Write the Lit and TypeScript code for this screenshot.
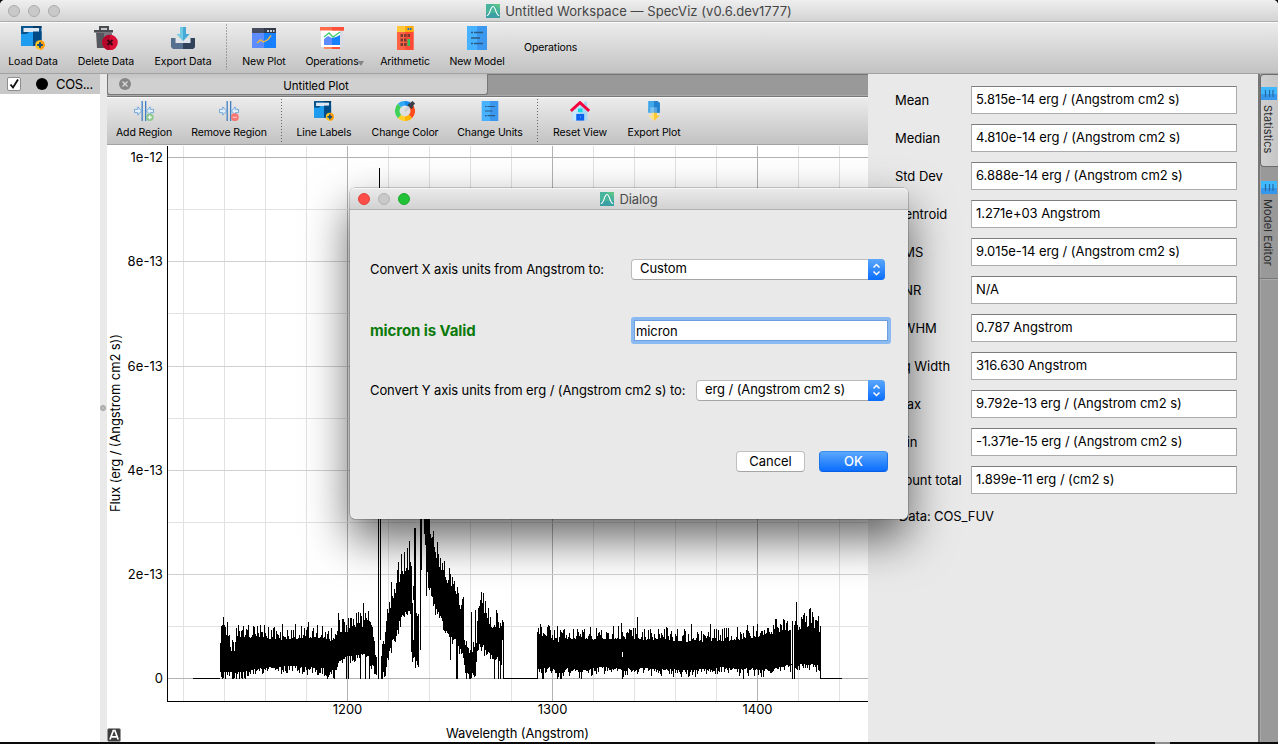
import { LitElement, html, svg, css } from "lit";
import { customElement, property } from "lit/decorators.js";

const icons: Record<string, any> = {
  load: svg`<path fill="#08548f" d="M0 0h20.500v20H0z"/><path fill="#003a66" d="M12 0h8.500v2H12z"/><path fill="#dfe8f2" d="M2.500 2h15.500v4H2.500z"/><path fill="#1e9cf0" d="M0 8h6l2-2h4v14H0z"/><path fill="#004a86" d="M12 5.500h8.500V20H12z"/><circle cx="19" cy="19" r="4.800" fill="#ffc423"/><path fill="#ff9c0e" d="M19 14.200a4.800 4.800 0 0 1 0 9.600z"/><path fill="#124a78" d="M18 16.300h2V18h1.800v2H20v1.800h-2V20h-1.800v-2H18z"/>`,
  trash: svg`<path fill="#4b4b52" d="M5 0h10v4h4v2.500H0V4h5z"/><path fill="#c8c8ca" d="M7 2h6v2H7z"/><path fill="#56565e" d="M2 6.500h15V22H3z"/><path fill="#77777f" d="M10 6.500h8V12h-8z"/><circle cx="16" cy="16.500" r="7.800" fill="#d90f35"/><path fill="#b4062a" d="M16 8.700a7.800 7.800 0 0 0 0 15.600z"/><path stroke="#3d0413" stroke-width="1.900" d="M13.500 14l5 5M18.500 14l-5 5"/>`,
  exportd: svg`<path fill="#56718f" d="M0 12h5v5h14v-5h5v9l-2 2H2l-2-2z"/><path fill="#30425a" d="M12 17h7v-5h5v9l-2 2H12z"/><path fill="#dfe5ea" d="M4.500 12h3l4.500 4 4.500-4h3v5h-15z"/><path fill="#72cbe2" d="M9 1h6v7h3.500L12 15 5.500 8H9z"/><path fill="#45a9d8" d="M12 1h3v7h3.500L12 15z"/>`,
  plot: svg`<path fill="#454d5e" d="M0 2h24v6H0z"/><path fill="#323948" d="M12 2h12v6H12z"/><path fill="#5d8cff" d="M0 7h12v15H0z"/><path fill="#1680ff" d="M12 7h12v15H12z"/><path fill="#fff" d="M15 4.200h2v1.600h-2zM18 4.200h2v1.600h-2zM21 4.200h1.500v1.600H21z"/><path fill="none" stroke="#f1b63c" stroke-width="1.400" d="M5 17l3.500-3 3 2L16 13.500l3-4"/>`,
  ops: svg`<path fill="#fff" d="M1 4h22v17H1z"/><path fill="#d8dce6" d="M20 4h3v17h-3z"/><path fill="#ff6a48" d="M0 1h24v3.500H0z"/><path fill="#ff4f38" d="M12 1h12v3.500H12zM12 21h8v2h-8z"/><path fill="#ff8a62" d="M4 21h8v2H4z"/><path fill="#5d8cff" d="M4 13l4-3 4 2v7H4z"/><path fill="#1680ff" d="M12 12l4-1 4-2v10h-8z"/><path fill="none" stroke="#43cf72" stroke-width="1.400" d="M4 11l5-4 4 4 7-5"/>`,
  calc: svg`<path fill="#ff6345" d="M4 5h16.500v19H4z"/><path fill="#ff4a38" d="M12 5h8.500v19H12z"/><path fill="#ffc83a" d="M4 0h16.500v6H4z"/><path fill="#ffab08" d="M12 0h8.500v6H12z"/><path fill="#1676c8" d="M14.500 2h1.800v2h-1.800zM17 2h1.500v2H17z"/><path fill="#7d3a34" d="M7.500 8h2.500v3H7.500zM11 8h2.500v3H11zM14.500 8H17v3h-2.500zM7.500 12.500h2.500v3H7.500zM11 12.500h2.500v3H11zM7.500 17h2.500v3H7.500zM11 17h2.500v3H11z"/><path fill="#2fc45c" d="M14.500 13H17v7h-2.500z"/>`,
  doc: svg`<path fill="#47b2ff" d="M2 0h10v24H2z"/><path fill="#3b98ee" d="M12 0h10v24H12z"/><path stroke="#2c5b83" stroke-width="1.300" d="M6 6.500h2M9 6.500h9M6 12h9M6 17.500h2M9 17.500h9"/>`,
  add: svg`<path stroke="#3a7cc4" stroke-width="1.500" d="M9.800 0v24M14 0v24"/><path fill="#e4effa" stroke="#5f9cd8" d="M.6 10h4V7L9 12l-4.400 5v-3h-4zM23.400 10h-4V7L15 12l4.400 5v-3h4z"/><circle cx="19" cy="19.500" r="4.500" fill="#8cc88e"/><path stroke="#fff" stroke-width="1.400" d="M16.500 19.500h5M19 17v5"/>`,
  remove: svg`<path stroke="#3a7cc4" stroke-width="1.500" d="M9.800 0v24M14 0v24"/><path fill="#e4effa" stroke="#5f9cd8" d="M.6 10h4V7L9 12l-4.400 5v-3h-4zM23.400 10h-4V7L15 12l4.400 5v-3h4z"/><circle cx="19" cy="19.500" r="4.700" fill="#f77672"/><path stroke="#fbd0ce" stroke-width="1.400" d="M16.300 19.500h5.400"/>`,
  color: svg`<g fill="none" stroke-width="5.500"><path stroke="#2fa8f5" d="M5.400 5.400A9.300 9.300 0 0 1 12 2.700"/><path stroke="#118df0" d="M12 2.700A9.300 9.300 0 0 1 18.600 5.400"/><path stroke="#ff4a1a" d="M18.600 5.400A9.300 9.300 0 0 1 18.600 18.600"/><path stroke="#ffb400" d="M18.600 18.600A9.300 9.300 0 0 1 12 21.300"/><path stroke="#ffd02b" d="M12 21.300A9.300 9.300 0 0 1 5.400 18.600"/><path stroke="#3fd05a" d="M5.400 18.600A9.300 9.300 0 0 1 5.400 5.400"/></g><path stroke="#c9ced2" stroke-width="3" d="M12 12l5-5"/><path stroke="#3a3f48" stroke-width="3.500" d="M16 3.500l5 5"/><path stroke="#3a3f48" stroke-width="4.500" d="M18.500 5.500L22.500 1.500"/>`,
  home: svg`<path fill="#a9daf5" d="M17 1h3.500v8H17zM3 11l9-8 9 8v12.500H3z"/><path fill="#c5e8fa" d="M3 11l9-8v20.500H3z"/><path fill="#12d8e4" d="M9.500 9h5.500v4.500H9.500z"/><path fill="#0b62f0" d="M7.500 15.500h9.500v8H7.500z"/><path fill="#5fa0ff" d="M12 18h1v2h-1z"/><path fill="none" stroke="#f4033c" stroke-width="3.600" d="M1 12L12 2l11 10"/>`,
  save: svg`<path fill="#3fa7ea" d="M5 0h11l3 2.500V14H5z"/><path fill="#2382cf" d="M12 0h4l3 2.500V14h-7z"/><path fill="#7cc0ee" d="M7.500 7.500H12V14H7.500z"/><path fill="#5ba8e0" d="M12 7.500h3.500V14H12z"/><path fill="#ffe08a" d="M9 14h3v10l-7-6.500h4z"/><path fill="#ffc832" d="M12 14h3.500v3.500H19L12 24z"/>`,
};

const logo = svg`<path fill="#48b49b" d="M0 0h14v14H0z"/><path fill="#5cc489" d="M6 0h8v5z"/><path fill="#3aa0a4" d="M0 9h14v5H0z"/><path fill="none" stroke="#fff" stroke-width="1.100" d="M.8 11.500C4.500 11.500 4 2.500 7 2.500s2.500 9 6.200 9"/>`;

/** Toolbar button: a glyph with its caption below. */
@customElement("tool-item")
class ToolItem extends LitElement {
  @property() icon = "";
  @property() label = "";
  @property({ type: Number }) size = 24;
  @property({ type: Boolean }) menu = false;
  static styles = css`
    :host { display: flex; flex-direction: column; align-items: center; flex: none; }
    svg { display: block; }
    .cap { position: relative; font-size: 10.5px; letter-spacing: -0.12px; line-height: 14px; white-space: nowrap; margin-top: 5px; }
    .arrow { position: absolute; left: 100%; top: 6px; border: 3.5px solid transparent; border-top: 5px solid #858585; border-bottom: 0; margin-left: -1px; }
  `;
  render() {
    return html`<svg width=${this.size} height=${this.size} viewBox="0 0 24 24">${icons[this.icon]}</svg>
      <div class="cap">${this.label}${this.menu ? html`<span class="arrow"></span>` : ""}</div>`;
  }
}

/** Control points of the spectrum envelope: x, upper edge, lower edge. */
const envelope: number[][] = [
  [220, 640, 672], [222, 632, 673], [226, 632, 672], [229, 640, 672], [231, 648, 673], [234, 648, 674], [236, 634, 673], [250, 635, 671],
  [262, 635, 669], [280, 637, 667], [300, 636, 667], [325, 635, 669], [330, 640, 671], [334, 637, 671], [338, 630, 663], [347, 629, 657],
  [352, 625, 656], [359, 622, 656], [362, 624, 653], [368, 622, 657], [372, 626, 664], [374, 645, 669], [376, 662, 676], [377, 666, 678],
];
const peak: number[][] = [
  [381, 660, 678], [383, 656, 672], [385, 632, 665], [388, 612, 655], [392, 598, 640], [396, 588, 630], [400, 577, 619], [405, 570, 611],
  [410, 565, 604], [411, 572, 640], [412, 600, 652], [413, 600, 650], [416, 610, 662], [418, 622, 668], [419, 590, 645],
];
const decline: number[][] = [
  [424, 519, 530], [426, 519, 560], [428, 522, 580], [431, 535, 594], [435, 552, 608], [440, 567, 616], [445, 577, 631], [450, 586, 638],
  [456, 600, 640], [461, 608, 652], [463, 612, 655], [465, 644, 673], [470, 652, 674], [474, 650, 672], [476, 640, 660], [478, 605, 644],
  [482, 606, 644], [487, 618, 651], [492, 626, 657], [497, 626, 658], [502, 626, 665],
];
const right: number[][] = [
  [537, 632, 670], [548, 635, 667], [555, 638, 671], [560, 640, 674], [564, 636, 669], [580, 637, 671], [600, 637, 668], [620, 636, 669],
  [640, 637, 669], [660, 637, 670], [690, 639, 671], [720, 638, 668], [740, 637, 670], [750, 636, 669], [760, 633, 671], [775, 630, 669],
  [785, 628, 666], [795, 627, 666], [803, 626, 664], [813, 625, 664], [820, 630, 668],
];

function spectrum(): string {
  let seed = 41;
  const rnd = () => (seed = (seed * 16807) % 2147483647) / 2147483647;
  let d = "";
  const bar = (x: number, a: number, b: number) => { d += `M${x + 0.5} ${Math.round(a)}V${Math.round(b)}`; };
  const fill = (pts: number[][], noise: number) => {
    for (let i = 0; i < pts.length - 1; i++) {
      const [x0, t0, b0] = pts[i], [x1, t1, b1] = pts[i + 1];
      for (let x = x0; x < x1; x++) {
        const k = (x - x0) / (x1 - x0);
        const up = Math.pow(rnd(), 1.8) * noise - 3;
        const dn = Math.pow(rnd(), 2) * noise * 0.6 - 1;
        bar(x, t0 + (t1 - t0) * k - up, Math.min(679, b0 + (b1 - b0) * k + dn));
      }
    }
  };
  fill(envelope, 14);
  fill(peak, 22);
  fill(decline, 20);
  fill(right, 13);
  const spikes: number[][] = [
    [223, 617, 670], [227, 622, 670], [221, 630, 672], [238, 626, 670], [257, 626, 670], [282, 624, 670], [295, 624, 668], [308, 622, 668],
    [338, 613, 660], [350, 618, 655], [358, 612, 650], [363, 603, 650], [366, 618, 650], [379, 168, 188], [378, 519, 640], [380, 519, 640],
    [378, 620, 679], [245, 640, 679], [232, 640, 679], [233, 655, 679], [225, 640, 679], [327, 640, 679], [334, 650, 679], [346, 640, 679], [348, 640, 679],
    [360, 640, 679], [365, 640, 679], [369, 640, 679], [398, 562, 600], [391, 582, 640], [401, 554, 600], [407, 548, 600], [409, 541, 600],
    [414, 528, 655], [415, 528, 640], [420, 519, 650], [421, 519, 570], [424, 519, 532], [425, 519, 535], [426, 519, 596], [427, 519, 572], [428, 519, 580],
    [433, 531, 600], [437, 542, 610], [444, 571, 620], [449, 568, 636], [450, 590, 660], [453, 584, 640], [458, 593, 640], [456, 600, 679], [457, 610, 679],
    [463, 597, 650], [466, 645, 679], [470, 650, 679], [471, 612, 678], [475, 610, 676], [480, 600, 640], [481, 592, 640], [483, 594, 640], [488, 608, 650],
    [496, 610, 652], [494, 640, 679], [498, 640, 679], [500, 624, 679], [502, 620, 640], [503, 622, 679], [537, 632, 678], [548, 625, 668], [557, 626, 679],
    [542, 640, 679], [543, 650, 679], [561, 640, 679], [581, 650, 679], [590, 627, 668], [621, 623, 670], [622, 650, 679], [623, 640, 677], [637, 617, 668], [666, 627, 668],
    [691, 624, 668], [710, 624, 669], [743, 645, 679], [737, 627, 668], [747, 625, 668], [757, 624, 668], [775, 619, 668], [776, 619, 664], [784, 620, 664],
    [792, 621, 679], [794, 625, 679], [796, 602, 664], [803, 615, 664], [804, 613, 664], [806, 617, 662], [809, 609, 660], [810, 608, 660], [812, 612, 664], [818, 616, 664], [820, 626, 679],
  ];
  spikes.forEach((s) => bar(s[0], s[1], s[2]));
  return d;
}
const trace = spectrum();

const gridX = Array.from({ length: 17 }, (_, i) => 183 + 41 * i);
const gridY = [157, 209, 261, 313, 366, 418, 470, 522, 574, 626, 678];

/** Spectrum plot with its axes; user units are window pixels. */
@customElement("spectrum-plot")
class SpectrumPlot extends LitElement {
  static styles = css`
    :host { display: block; background: #fff; overflow: hidden; }
    svg { display: block; }
    text { font: 13px Inter, "Liberation Sans", sans-serif; fill: #000; }
    .crisp { shape-rendering: crispEdges; }
    .tick { letter-spacing: .1px; }
  `;
  render() {
    return html`<svg width="761" height="597" viewBox="107 145 761 597">
      <g class="crisp" fill="none">
        ${gridX.map((x, i) => svg`<path d="M${x + 0.5} 146V701" stroke=${i % 5 === 4 ? "#b2b2b2" : "#e2e2e2"} />`)}
        ${gridY.map((y, i) => svg`<path d="M168 ${y + 0.5}H868" stroke=${i % 10 === 0 ? "#b2b2b2" : i % 2 ? "#e2e2e2" : "#d0d0d0"} />`)}
        <path d="M167.500 146V701.500H868" stroke="#000" />
        <path d="M193 678.500H220M503 678.500H538M820 678.500H842" stroke="#000" />
        <path d=${trace} stroke="#000" />
        <path d="M413.500 600V640M464.500 600V640M476.500 590V606M622.500 652V657M791.500 610V664M793.500 625V678M417.500 519V610M422.500 519V677M423.500 535V677" stroke="#fff" />
      </g>
      ${[["1e-12", 162], ["8e-13", 266], ["6e-13", 370.500], ["4e-13", 475], ["2e-13", 579], ["0", 683]].map(([t, y]) => svg`<text class="tick" x="163" y=${y} text-anchor="end">${t}</text>`)}
      ${[["1200", 347.500], ["1300", 552.500], ["1400", 757.500]].map(([t, x]) => svg`<text x=${x} y="714" text-anchor="middle">${t}</text>`)}
      <text x="446" y="738" textLength="143">Wavelength (Angstrom)</text>
      <text transform="translate(119.500 512) rotate(-90)" textLength="178">Flux (erg / (Angstrom cm2 s))</text>
      <rect x="107.500" y="728.500" width="13" height="13" rx="1.500" fill="#3c3c3c" stroke="#999" />
      <path d="M110 739.500L113.300 730.500h1.600L118.200 739.500M111.700 736.800h4.800" fill="none" stroke="#fff" stroke-width="1.700" />
    </svg>`;
  }
}

const stats = [
  ["Mean", "5.815e-14 erg / (Angstrom cm2 s)"], ["Median", "4.810e-14 erg / (Angstrom cm2 s)"], ["Std Dev", "6.888e-14 erg / (Angstrom cm2 s)"],
  ["Centroid", "1.271e+03 Angstrom"], ["RMS", "9.015e-14 erg / (Angstrom cm2 s)"], ["SNR", "N/A"], ["FWHM", "0.787 Angstrom"],
  ["Eq Width", "316.630 Angstrom"], ["Max", "9.792e-13 erg / (Angstrom cm2 s)"], ["Min", "-1.371e-15 erg / (Angstrom cm2 s)"], ["Count total", "1.899e-11 erg / (cm2 s)"],
];

/** Modal for converting the axis units. */
@customElement("units-dialog")
class UnitsDialog extends LitElement {
  static styles = css`
    :host { display: flex; flex-direction: column; box-sizing: border-box; background: #e9e9e9; border-radius: 5px; font-size: 13px; letter-spacing: -0.09px;
      box-shadow: 0 0 0 0.5px rgba(0,0,0,.35), 0 20px 45px rgba(0,0,0,.6); }
    .bar { height: 22px; box-sizing: border-box; border-bottom: 1px solid #b1b1b1; border-radius: 5px 5px 0 0; background: linear-gradient(#ebebeb, #d2d2d2); display: grid; grid-template-columns: 1fr auto 1fr; align-items: center; box-shadow: inset 0 1px #f6f6f6; }
    .lights { display: flex; gap: 8px; padding-left: 8px; }
    .dot { width: 12px; height: 12px; box-sizing: border-box; border-radius: 50%; background: #c9c9c9; border: 1px solid #b3b3b3; }
    .red { background: #fd4e48; border-color: #e2413c; }
    .green { background: #22c236; border-color: #1bab2c; }
    .title { display: flex; gap: 5px; align-items: center; color: #4a4a4a; padding-top: 1px; }
    .row { display: flex; align-items: center; padding: 0 23px 0 20px; height: 27px; white-space: nowrap; }
    .r1 { margin-top: 46px; } .r2 { margin-top: 34px; padding-right: 17px; } .r3 { margin-top: 33px; }
    .lab { padding-bottom: 2px; }
    .ok-msg { color: #0b7a0b; font-weight: 700; font-size: 15px; letter-spacing: -0.1px; padding-bottom: 1px; }
    .grow { flex: 1; }
    .select { display: flex; height: 21px; box-sizing: border-box; background: #fff; border: 1px solid #bcbcbc; border-bottom-color: #a5a5a5; border-radius: 4px; line-height: 17px; padding-left: 8px; justify-content: space-between; }
    .wide { width: 254px; } .narrow { width: 189px; }
    .step { width: 17px; height: 21px; margin: -1px; border-radius: 0 4px 4px 0; background: linear-gradient(#5aa7fb, #0a6dfd); display: block; }
    .field { width: 260px; height: 27px; box-sizing: border-box; border: 3px solid #8abaf1; border-radius: 3px; background: #fff; box-shadow: inset 0 0 0 1px #6d9fdc; line-height: 23px; padding-left: 2px; }
    .buttons { display: flex; justify-content: flex-end; gap: 14px; padding-right: 20px; margin-top: 47px; }
    .btn { width: 69px; height: 21px; box-sizing: border-box; border-radius: 4px; background: #fff; border: 1px solid #bfbfbf; border-bottom-color: #a5a5a5; text-align: center; line-height: 19px; letter-spacing: -0.03px; }
    .primary { color: #fff; background: linear-gradient(#5aa7fb, #0a6dfd); border-color: #3c8ff2 #1c74ea #0a5fe0; font-weight: 500; }
  `;
  render() {
    const step = html`<svg class="step" viewBox="0 0 17 21" width="17" height="21"><path d="M5.500 8.500L8.500 5.500l3 3M5.500 12.500l3 3 3-3" fill="none" stroke="#fff" stroke-width="1.500"/></svg>`;
    return html`<div class="bar">
        <div class="lights"><span class="dot red"></span><span class="dot"></span><span class="dot green"></span></div>
        <div class="title"><svg width="14" height="14" viewBox="0 0 14 14">${logo}</svg><span>Dialog</span></div>
      </div>
      <div class="row r1"><span class="lab">Convert X axis units from Angstrom to:</span><span class="grow"></span><div class="select wide">Custom${step}</div></div>
      <div class="row r2"><span class="ok-msg">micron is Valid</span><span class="grow"></span><div class="field">micron</div></div>
      <div class="row r3"><span class="lab">Convert Y axis units from erg / (Angstrom cm2 s) to:</span><span class="grow"></span><div class="select narrow">erg / (Angstrom cm2 s)${step}</div></div>
      <div class="buttons"><div class="btn">Cancel</div><div class="btn primary">OK</div></div>`;
  }
}

@customElement("app-root")
class AppRoot extends LitElement {
  static styles = css`
    :host { display: block; width: 1278px; height: 744px; position: relative; overflow: hidden; background: #0a0a0a; font: 13px Inter, "Liberation Sans", sans-serif; color: #000; }
    .window { display: flex; flex-direction: column; height: 742px; border-radius: 5px 5px 0 0; overflow: hidden; background: #e9e9e9; }
    .foot { width: 15px; height: 2px; margin-left: 1155px; background: #8c8c8c; }
    .titlebar { flex: none; height: 22px; box-sizing: border-box; border-bottom: 1px solid #adadad; background: linear-gradient(#efefef, #d3d3d3); display: grid; grid-template-columns: 1fr auto 1fr; align-items: center; }
    .lights { display: flex; gap: 8px; padding-left: 8px; }
    .dot { width: 12px; height: 12px; box-sizing: border-box; border-radius: 50%; background: #c9c9c9; border: 1px solid #acacac; }
    .title { display: flex; align-items: center; gap: 5px; color: #454545; padding-top: 1px; letter-spacing: .05px; }
    .toolbar { flex: none; height: 52px; box-sizing: border-box; display: flex; border-top: 1px solid #fafafa; border-bottom: 1px solid #a2a2a2; background: linear-gradient(#ececec, #c2c2c2); padding-top: 3px; }
    .sub { height: 48px; }
    .sep { flex: none; margin-top: -2px; height: 46px; background: linear-gradient(#666 50%, transparent 50%) center / 1px 3px repeat-y; }
    .sub .sep { height: 43px; background-position: 4px 0; }
    .sub .w14 { background-position: 6px 0; }
    .w10 { width: 10px; } .w12 { width: 12px; } .w14 { width: 14px; } .w64 { width: 64px; } .w66 { width: 66px; } .w70 { width: 70px; } .w72 { width: 72px; }
    .w74 { width: 74px; } .w78 { width: 78px; } .w80 { width: 80px; } .w82 { width: 82px; } .w88 { width: 88px; } .w96 { width: 96px; }
    .plain { font-size: 10.5px; letter-spacing: -0.12px; line-height: 44px; padding-left: 12px; }
    .main { flex: 1; min-height: 0; display: flex; }
    .list { width: 100px; background: #fff; }
    .entry { height: 20px; background: #c8c8c8; display: flex; align-items: center; }
    .check { width: 12px; height: 12px; border: 1px solid #8e8e8e; border-radius: 2px; background: #fff; margin-left: 7px; }
    .check svg { display: block; }
    .ball { width: 12px; height: 12px; border-radius: 50%; background: #000; margin: 0 8px 0 15px; }
    .cos { letter-spacing: -0.35px; }
    .split { width: 7px; display: flex; align-items: center; }
    .grip { width: 4px; height: 4px; border-radius: 50%; background: #b9b9b9; border: 1px solid #a2a2a2; }
    .center { width: 761px; display: flex; flex-direction: column; }
    .tabs { height: 23px; box-sizing: border-box; background: #999; box-shadow: inset 0 1px #777, inset 0 -1px #777, inset 0 -2px #aaa; display: flex; }
    .tab { width: 381px; height: 21px; box-sizing: border-box; background: linear-gradient(#c4c4c4, #d0d0d0 30%); border: 1px solid #777; border-top: 0; border-radius: 0 0 3px 3px; display: flex; align-items: center; }
    .close { display: block; margin-left: 11px; }
    .tabname { flex: 1; text-align: center; font-size: 11.5px; padding: 3px 0 0 14px; letter-spacing: -0.07px; }
    .panel { width: 390px; box-sizing: border-box; padding: 12px 0 0 27px; letter-spacing: -0.05px; }
    .stat { display: flex; align-items: center; height: 28px; margin-bottom: 10px; }
    .stat .name { width: 76px; white-space: nowrap; padding-bottom: 1px; }
    .value { width: 266px; height: 28px; box-sizing: border-box; background: #fff; border: 1px solid #ababab; border-top-color: #7d7d7d; line-height: 25px; padding-left: 4px; white-space: nowrap; }
    .data { padding: 4px 0 0 4px; line-height: 16px; letter-spacing: -0.1px; }
    .side { flex: 1; background: #999; border-left: 2px solid #777; box-shadow: inset 1px 0 #a8a8a8; display: flex; flex-direction: column; }
    .vtab { box-sizing: border-box; display: flex; flex-direction: column; align-items: flex-start; gap: 5px; color: #2c2c2c; }
    .first { height: 93px; background: linear-gradient(90deg, #d0d0d0, #c6c6c6); border: 1px solid #6c6c6c; border-right: 0; border-radius: 4px 0 0 4px; padding-top: 12px; }
    .second { height: 112px; border-bottom: 1px solid #777; box-shadow: 0 1px #aaa; padding: 14px 0 0 1px; }
    .vtext { writing-mode: vertical-rl; font-size: 11px; line-height: 14px; letter-spacing: .12px; }
    .vtab svg { display: block; }
    units-dialog { position: absolute; left: 350px; top: 188px; width: 558px; height: 331px; }
  `;
  render() {
    const vicon = svg`<path fill="#3fb8ff" d="M0 0h16v7H0z"/><path fill="#3598ec" d="M0 7h16v6H0z"/><path stroke="#2768a0" stroke-width="1.200" d="M4.500 3v7M8.500 3v7M12 3v7"/>`;
    return html`<div class="window">
        <div class="titlebar">
          <div class="lights"><span class="dot"></span><span class="dot"></span><span class="dot"></span></div>
          <div class="title"><svg width="14" height="14" viewBox="0 0 14 14">${logo}</svg><span>Untitled Workspace — SpecViz (v0.6.dev1777)</span></div>
        </div>
        <div class="toolbar">
          <tool-item class="w66" icon="load" label="Load Data"></tool-item>
          <tool-item class="w80" icon="trash" label="Delete Data"></tool-item>
          <tool-item class="w74" icon="exportd" label="Export Data"></tool-item>
          <span class="sep w12"></span>
          <tool-item class="w64" icon="plot" label="New Plot"></tool-item>
          <tool-item class="w72" icon="ops" label="Operations" menu></tool-item>
          <tool-item class="w74" icon="calc" label="Arithmetic"></tool-item>
          <tool-item class="w70" icon="doc" label="New Model"></tool-item>
          <span class="plain">Operations</span>
        </div>
        <div class="main">
          <div class="list"><div class="entry">
            <span class="check"><svg width="12" height="12" viewBox="0 0 12 12"><path d="M2.500 6.500L5 9.500 10 1.500" fill="none" stroke="#111" stroke-width="1.900"/></svg></span>
            <span class="ball"></span><span class="cos">COS...</span></div></div>
          <div class="split"><span class="grip"></span></div>
          <div class="center">
            <div class="tabs"><div class="tab">
              <svg class="close" width="12" height="12" viewBox="0 0 12 12"><circle cx="6" cy="6" r="6" fill="#868686"/><path d="M3.500 3.500l5 5M8.500 3.500l-5 5" stroke="#dadada" stroke-width="1.300"/></svg>
              <span class="tabname">Untitled Plot</span></div></div>
            <div class="toolbar sub">
              <tool-item class="w74" size="20" icon="add" label="Add Region"></tool-item>
              <tool-item class="w96" size="20" icon="remove" label="Remove Region"></tool-item>
              <span class="sep w10"></span>
              <tool-item class="w74" size="20" icon="load" label="Line Labels"></tool-item>
              <tool-item class="w88" size="20" icon="color" label="Change Color"></tool-item>
              <tool-item class="w82" size="20" icon="doc" label="Change Units"></tool-item>
              <span class="sep w14"></span>
              <tool-item class="w70" size="20" icon="home" label="Reset View"></tool-item>
              <tool-item class="w78" size="20" icon="save" label="Export Plot"></tool-item>
            </div>
            <spectrum-plot></spectrum-plot>
          </div>
          <div class="panel">
            ${stats.map(([n, v]) => html`<div class="stat"><span class="name">${n}</span><div class="value">${v}</div></div>`)}
            <div class="data">Data: COS_FUV</div>
          </div>
          <div class="side">
            <div class="vtab first"><svg width="16" height="13" viewBox="0 0 16 13">${vicon}</svg><span class="vtext">Statistics</span></div>
            <div class="vtab second"><svg width="16" height="13" viewBox="0 0 16 13">${vicon}</svg><span class="vtext">Model Editor</span></div>
          </div>
        </div>
      </div>
      <div class="foot"></div>
      <units-dialog></units-dialog>`;
  }
}
